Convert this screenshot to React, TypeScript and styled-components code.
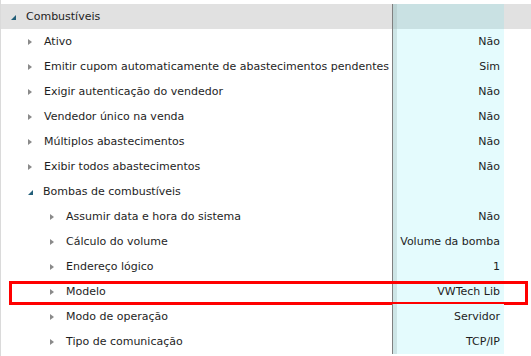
import React from "react";
import styled, { createGlobalStyle } from "styled-components";

const GlobalStyle = createGlobalStyle`
  html, body {
    margin: 0;
    padding: 0;
    background: #ffffff;
  }
  body {
    font-family: "DejaVu Sans", Verdana, sans-serif;
    font-size: 11px;
    color: #1e1e1e;
  }
`;

type Item = {
  label: string;
  value?: string;
  level: number;
  expanded?: boolean;
  highlight?: boolean;
};

const items: Item[] = [
  { label: "Combustíveis", level: 0, expanded: true },
  { label: "Ativo", value: "Não", level: 1 },
  { label: "Emitir cupom automaticamente de abastecimentos pendentes", value: "Sim", level: 1 },
  { label: "Exigir autenticação do vendedor", value: "Não", level: 1 },
  { label: "Vendedor único na venda", value: "Não", level: 1 },
  { label: "Múltiplos abastecimentos", value: "Não", level: 1 },
  { label: "Exibir todos abastecimentos", value: "Não", level: 1 },
  { label: "Bombas de combustíveis", level: 1, expanded: true },
  { label: "Assumir data e hora do sistema", value: "Não", level: 2 },
  { label: "Cálculo do volume", value: "Volume da bomba", level: 2 },
  { label: "Endereço lógico", value: "1", level: 2 },
  { label: "Modelo", value: "VWTech Lib", level: 2, highlight: true },
  { label: "Modo de operação", value: "Servidor", level: 2 },
  { label: "Tipo de comunicação", value: "TCP/IP", level: 2 },
];

// tree toggle x offset (inside the tree's left border) per level
const indent = [10, 27, 49];

const Tree = styled.div`
  padding-top: 4px;
  border-left: 1px solid #dadada;
  height: 352px;
  overflow: hidden;
`;

const Row = styled.div<{ $group: boolean; $highlight: boolean }>`
  position: relative;
  display: grid;
  grid-template-columns: 391px 1px 111px 1fr;
  height: 25px;
  background: ${(p) => (p.$group ? "#e1e1e1" : "transparent")};

  ${(p) =>
    p.$highlight &&
    `
    &::after {
      content: "";
      position: absolute;
      left: 8px;
      right: 3px;
      top: 2px;
      bottom: -1px;
      border: 3px solid #ff0000;
      pointer-events: none;
    }
  `}
`;

const NameCell = styled.div<{ $level: number }>`
  display: flex;
  align-items: center;
  padding-left: ${(p) => indent[p.$level]}px;
  white-space: nowrap;
  overflow: hidden;
`;

const Toggle = styled.span<{ $open: boolean }>`
  flex: none;
  width: 0;
  height: 0;
  border-style: solid;
  ${(p) =>
    p.$open
      ? `
    border-width: 0 0 5px 5px;
    border-color: transparent transparent #235f79 transparent;
    margin: 2px 10px 0 0;
  `
      : `
    border-width: 3.5px 0 3.5px 4px;
    border-color: transparent transparent transparent #8a8a8a;
    margin: 0 12px 0 0;
  `}
`;

const Divider = styled.div`
  background: #808080;
`;

const ValueCell = styled.div<{ $group: boolean }>`
  display: flex;
  align-items: center;
  justify-content: flex-end;
  padding-right: 4px;
  white-space: nowrap;
  background: ${(p) =>
    p.$group
      ? "linear-gradient(to right, #bcd3d4 0 4px, #c9e1e3 4px)"
      : "linear-gradient(to right, #cde5e6 0 4px, #e4fbfd 4px)"};
`;

export default function App() {
  return (
    <>
      <GlobalStyle />
      <Tree>
        {items.map((it) => {
          const group = it.level === 0;
          return (
            <Row key={it.label} $group={group} $highlight={!!it.highlight}>
              <NameCell $level={it.level}>
                <Toggle $open={!!it.expanded} />
                {it.label}
              </NameCell>
              <Divider />
              <ValueCell $group={group}>{it.value}</ValueCell>
              <div />
            </Row>
          );
        })}
      </Tree>
    </>
  );
}
